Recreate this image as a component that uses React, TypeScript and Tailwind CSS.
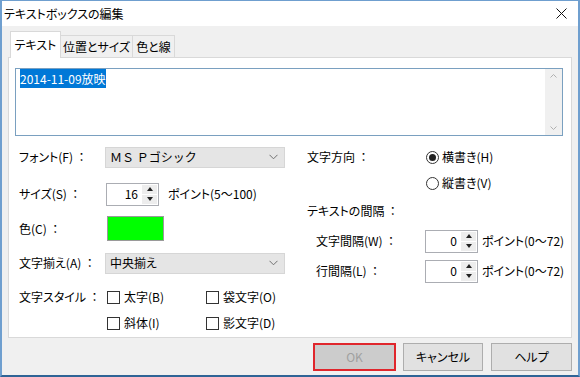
import React from "react"

const font = "font-['Noto_Sans_CJK_JP','Noto_Sans',sans-serif] [font-feature-settings:'palt']"

// ─── Small controls ───────────────────────────────────────────────────────────
function Chevron() {
  return (
    <svg width="9" height="6" viewBox="0 0 9 6" className="shrink-0">
      <path d="M0.5 0.8 L4.5 4.8 L8.5 0.8" fill="none" stroke="#707070" strokeWidth="1" />
    </svg>
  )
}

function Select({ value, palt = true }: { value: string; palt?: boolean }) {
  return (
    <div className="flex h-[21px] w-[180px] shrink-0 items-center justify-between border border-[#d6d6d6] bg-[#e5e5e5] pl-[4px] pr-[6px]">
      <span className={palt ? "" : "[font-feature-settings:normal]"}>{value}</span>
      <Chevron />
    </div>
  )
}

function Spin({ value }: { value: string }) {
  return (
    <div className="flex h-[23px] w-[53px] shrink-0 items-stretch border border-[#abadb3] bg-white">
      <div className="flex flex-1 items-center justify-end pr-[4px]">{value}</div>
      <div className="my-[1px] mr-[1px] flex w-[15px] flex-col gap-[1px]">
        <div className="flex flex-1 items-center justify-center bg-[#ededed]">
          <svg width="6" height="4" viewBox="0 0 6 4"><path d="M3 0 L6 4 L0 4Z" fill="#222" /></svg>
        </div>
        <div className="flex flex-1 items-center justify-center bg-[#ededed]">
          <svg width="6" height="4" viewBox="0 0 6 4"><path d="M0 0 L6 0 L3 4Z" fill="#222" /></svg>
        </div>
      </div>
    </div>
  )
}

function Check({ label }: { label: string }) {
  return (
    <div className="flex w-[99px] shrink-0 items-center gap-[4px]">
      <span className="h-[13px] w-[13px] shrink-0 border border-[#333] bg-white" />
      <span className="whitespace-nowrap">{label}</span>
    </div>
  )
}

function Radio({ label, on }: { label: string; on?: boolean }) {
  return (
    <div className="flex items-center gap-[3px]">
      <span className="flex h-[13px] w-[13px] items-center justify-center rounded-full border border-[#333] bg-white">
        {on && <span className="h-[7px] w-[7px] rounded-full bg-[#222]" />}
      </span>
      <span className="whitespace-nowrap">{label}</span>
    </div>
  )
}

// ─── Dialog ───────────────────────────────────────────────────────────────────
export default function App() {
  return (
    <div
      className={`${font} flex h-[377px] w-[580px] flex-col border-x-2 border-t border-b-2 border-x-[#6f9fcf] border-t-[#6f9fcf] border-b-[#2f6496] text-[12px] leading-none text-black`}
    >
      {/* Title bar */}
      <div className="flex h-[25px] shrink-0 items-center justify-between bg-white pl-[2px] pr-[11px]">
        <span className="text-[12px]">テキストボックスの編集</span>
        <svg width="11" height="11" viewBox="0 0 11 11">
          <path d="M0.5 0.5 L10.5 10.5 M10.5 0.5 L0.5 10.5" stroke="#111" strokeWidth="1" />
        </svg>
      </div>

      {/* Body */}
      <div className="flex flex-1 flex-col bg-[#f0f0f0] px-[6px] pt-[5px]">
        {/* Tabs */}
        <div className="relative z-10 -mb-px flex h-[27px] items-end pl-[2px]">
          <div className="flex h-[27px] w-[51px] items-center justify-center border border-b-0 border-[#d9d9d9] bg-white">
            テキスト
          </div>
          <div className="mb-px flex h-[22px] w-[72px] items-center justify-center border border-l-0 border-b-0 border-[#d9d9d9] bg-[#f0f0f0]">
            位置とサイズ
          </div>
          <div className="mb-px flex h-[22px] w-[42px] items-center justify-center border border-l-0 border-b-0 border-[#d9d9d9] bg-[#f0f0f0]">
            色と線
          </div>
        </div>

        {/* Panel */}
        <div className="flex h-[281px] flex-col border border-[#d9d9d9] bg-white">
          {/* Text area */}
          <div className="ml-[6px] mt-[10px] flex h-[68px] w-[548px] border border-[#7aa0c0] bg-white">
            <div className="flex-1 pl-[4px] pt-[4px]">
              <span className="bg-[#0078d7] py-[1px] text-white">2014-11-09放映</span>
            </div>
            <div className="flex w-[17px] flex-col items-center justify-between bg-[#f0f0f0] py-[5px]">
              <svg width="7" height="4" viewBox="0 0 7 4"><path d="M0.5 3.5 L3.5 0.5 L6.5 3.5" fill="none" stroke="#b0b0b0" /></svg>
              <svg width="7" height="4" viewBox="0 0 7 4"><path d="M0.5 0.5 L3.5 3.5 L6.5 0.5" fill="none" stroke="#b0b0b0" /></svg>
            </div>
          </div>

          {/* Form */}
          <div className="mt-[10px] flex pl-[10px]">
            {/* Left column */}
            <div className="flex w-[278px] shrink-0 flex-col">
              <div className="flex h-[22px] items-center">
                <span className="w-[86px] shrink-0 whitespace-pre">フォント(F)  ：</span>
                <Select value="ＭＳ Ｐゴシック" palt={false} />
              </div>
              <div className="mt-[15px] flex h-[22px] items-center">
                <span className="w-[87px] shrink-0 whitespace-pre">サイズ(S)  ：</span>
                <Spin value="16" />
                <span className="ml-[9px] whitespace-nowrap">ポイント(5〜100)</span>
              </div>
              <div className="mt-[11px] flex h-[25px] items-center">
                <span className="w-[88px] shrink-0 whitespace-pre">色(C)  ：</span>
                <span className="h-[25px] w-[57px] border border-[#9a9a9a] bg-[#00ff00]" />
              </div>
              <div className="mt-[11px] flex h-[22px] items-center">
                <span className="w-[86px] shrink-0 whitespace-pre">文字揃え(A)  ：</span>
                <Select value="中央揃え" />
              </div>
              <div className="mt-[12px] flex h-[22px] items-center">
                <span className="w-[88px] shrink-0 whitespace-pre">文字スタイル  ：</span>
                <Check label="太字(B)" />
                <Check label="袋文字(O)" />
              </div>
              <div className="mt-[4px] flex h-[22px] items-center pl-[88px]">
                <Check label="斜体(I)" />
                <Check label="影文字(D)" />
              </div>
            </div>

            {/* Right column */}
            <div className="ml-[10px] flex flex-1 flex-col">
              <div className="flex h-[22px] items-center">
                <span className="w-[119px] shrink-0 whitespace-pre">文字方向  ：</span>
                <Radio label="横書き(H)" on />
              </div>
              <div className="mt-[4px] flex h-[22px] items-center pl-[119px]">
                <Radio label="縦書き(V)" />
              </div>
              <div className="mt-[6px] flex h-[22px] items-center">
                <span className="whitespace-pre">テキストの間隔  ：</span>
              </div>
              <div className="mt-[8px] flex h-[22px] items-center pl-[9px]">
                <span className="w-[109px] shrink-0 whitespace-pre">文字間隔(W)  ：</span>
                <Spin value="0" />
                <span className="ml-[4px] whitespace-nowrap">ポイント(0〜72)</span>
              </div>
              <div className="mt-[8px] flex h-[22px] items-center pl-[9px]">
                <span className="w-[109px] shrink-0 whitespace-pre">行間隔(L)  ：</span>
                <Spin value="0" />
                <span className="ml-[4px] whitespace-nowrap">ポイント(0〜72)</span>
              </div>
            </div>
          </div>
        </div>

        {/* Buttons */}
        <div className="mt-[5px] flex justify-end">
          <div className="flex h-[28px] w-[83px] items-center justify-center border-2 border-[#e0262c] bg-[#cccccc] text-[#a0a0a0]">
            OK
          </div>
          <div className="ml-[7px] flex h-[28px] w-[80px] items-center justify-center border border-[#adadad] bg-[#e1e1e1]">
            キャンセル
          </div>
          <div className="ml-[8px] flex h-[28px] w-[81px] items-center justify-center border border-[#adadad] bg-[#e1e1e1]">
            ヘルプ
          </div>
        </div>
      </div>
    </div>
  )
}
